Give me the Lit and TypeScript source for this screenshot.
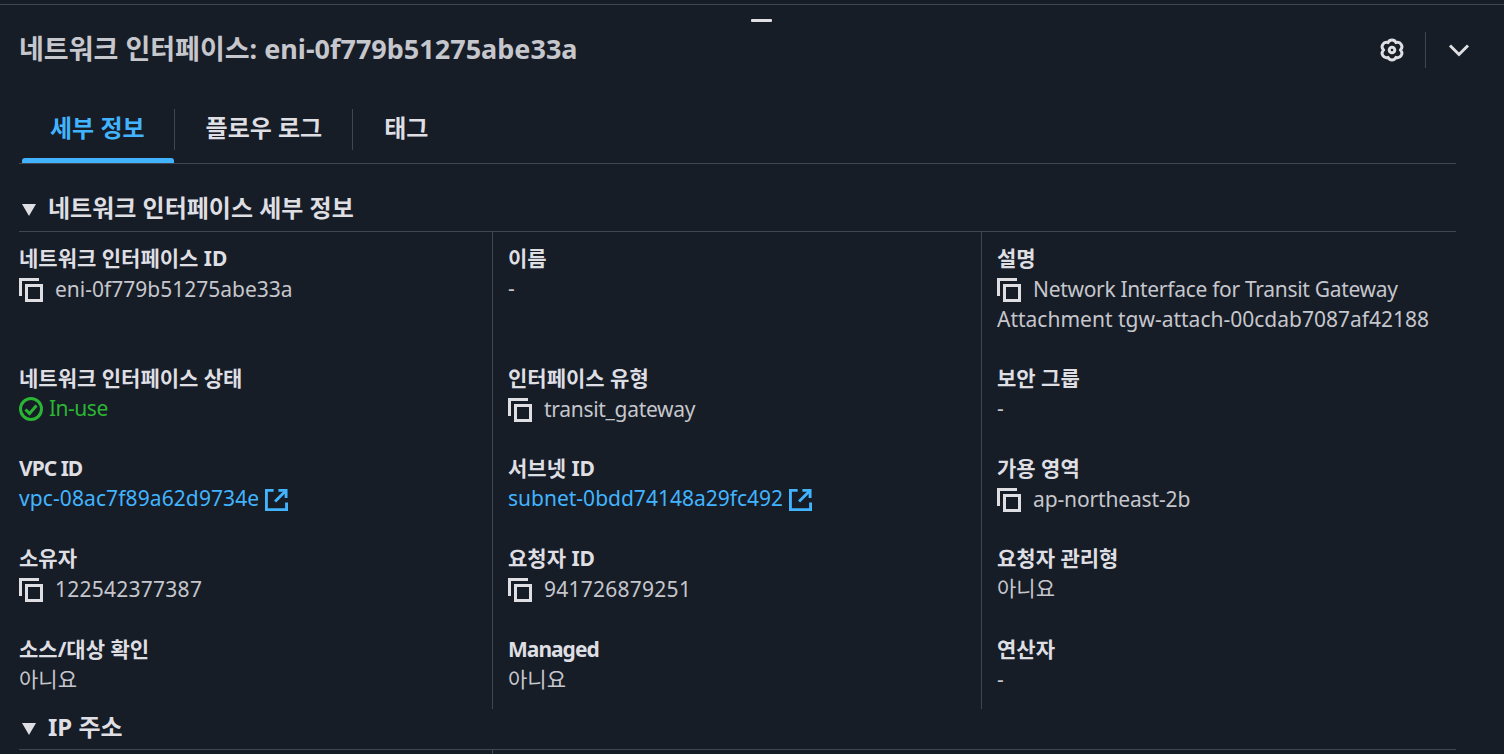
import { LitElement, html, css, svg } from "lit";
import { customElement } from "lit/decorators.js";

const copyIcon = html`<svg class="ico" viewBox="0 0 24 24" fill="none" stroke="currentColor" stroke-width="3">
  <path d="M1.5 18V1.5H20" /><rect x="7.5" y="7.5" width="15" height="15" />
</svg>`;

const extIcon = html`<svg class="ico ext" viewBox="0 0 24 24" fill="none" stroke="currentColor" stroke-width="3">
  <path d="M9 2.5H1.5v20h21V15" /><path d="M14 2.5h8v8" /><path d="M22 2.5 10.5 14" />
</svg>`;

const checkIcon = html`<svg class="ico ok" viewBox="0 0 24 24" fill="none" stroke="currentColor" stroke-width="3">
  <circle cx="12" cy="12" r="10.5" /><path d="M6.5 12.5l4 4L17.5 8.5" />
</svg>`;

const gear = svg`<path d="M8 4.6A4.4 4.4 0 0 1 16 4.6 4.4 4.4 0 0 1 20.4 12 4.4 4.4 0 0 1 16 19.4 4.4 4.4 0 0 1 8 19.4 4.4 4.4 0 0 1 3.6 12 4.4 4.4 0 0 1 8 4.6Z" stroke-linejoin="round" /><circle cx="12" cy="12" r="2.8" />`;

type Field = {
  label: string;
  value: string;
  kind?: "copy" | "link" | "ok";
  // Latin label or value whose advance differs from the installed Noto Sans
  fit?: string;
  labelFit?: boolean;
};

const fields: Field[] = [
  { label: "네트워크 인터페이스 ID", value: "eni-0f779b51275abe33a", kind: "copy" },
  { label: "이름", value: "-" },
  { label: "설명", value: "Attachment tgw-attach-00cdab7087af42188", kind: "copy" },
  { label: "네트워크 인터페이스 상태", value: "In-use", kind: "ok", fit: "tighter" },
  { label: "인터페이스 유형", value: "transit_gateway", kind: "copy", fit: "tight" },
  { label: "보안 그룹", value: "-" },
  { label: "VPC ID", value: "vpc-08ac7f89a62d9734e", kind: "link", fit: "wide", labelFit: true },
  { label: "서브넷 ID", value: "subnet-0bdd74148a29fc492", kind: "link" },
  { label: "가용 영역", value: "ap-northeast-2b", kind: "copy", fit: "slight" },
  { label: "소유자", value: "122542377387", kind: "copy", fit: "num" },
  { label: "요청자 ID", value: "941726879251", kind: "copy", fit: "num" },
  { label: "요청자 관리형", value: "아니요" },
  { label: "소스/대상 확인", value: "아니요" },
  { label: "Managed", value: "아니요", labelFit: true },
  { label: "연산자", value: "-" },
];

@customElement("app-root")
export class AppRoot extends LitElement {
  static styles = css`
    * {
      box-sizing: border-box;
    }

    :host {
      display: block;
      height: 754px;
      overflow: hidden;
      background: #161d26;
      color: #c6c6cd;
      font-family: "Noto Sans", "Noto Sans CJK KR", sans-serif;
      font-size: 21px;
      line-height: 30px;
    }

    .top-line {
      height: 1px;
      margin-top: 4px;
      background: #424650;
    }

    .handle {
      width: 21px;
      height: 3px;
      margin: 14px 0 0 751px;
      border-radius: 1px;
      background: #dedee3;
    }

    .head {
      display: flex;
      align-items: center;
      height: 40px;
      margin-top: 8px;
      padding: 0 34px 0 19px;
    }

    h1 {
      flex: 1;
      align-self: flex-start;
      margin: 0;
      font-size: 27px;
      font-weight: 700;
      line-height: 38px;
      color: #c6c6cd;
    }

    .gear {
      display: block;
      width: 24px;
      height: 24px;
      color: #dedee3;
    }

    .vbar {
      width: 1px;
      height: 36px;
      margin: 0 22px 0 21px;
      background: #424650;
    }

    .chev {
      display: block;
      width: 22px;
      height: 14px;
      color: #dedee3;
    }

    .tabs {
      display: flex;
      height: 55px;
      margin: 39px 48px 0 19px;
      padding-left: 3px;
      border-bottom: 1px solid #424650;
    }

    .tab {
      position: relative;
      height: 54px;
      padding: 0 30px 0 32px;
      font-size: 24px;
      font-weight: 700;
      line-height: 38px;
      color: #dedee3;
    }

    .tab + .tab::before {
      content: "";
      position: absolute;
      left: 0;
      top: 0;
      width: 1px;
      height: 41px;
      background: #424650;
    }

    .tab.active {
      padding: 0 29px 0 28px;
      color: #42b4ff;
    }

    .tab.active::after {
      content: "";
      position: absolute;
      left: 0;
      right: 0;
      bottom: 0;
      height: 5px;
      border-radius: 3px 3px 0 0;
      background: #42b4ff;
    }

    .section {
      margin: 0 48px 0 19px;
    }

    .section-head {
      display: flex;
      gap: 12px;
      height: 41px;
      border-bottom: 1px solid #424650;
      font-size: 24px;
      font-weight: 700;
      line-height: 36px;
      color: #dedee3;
    }

    .first {
      height: 42px;
      margin-top: 26px;
    }

    .caret {
      width: 0;
      height: 0;
      border-left: 7.5px solid transparent;
      border-right: 7.5px solid transparent;
      border-top: 12px solid #dedee3;
      margin: 14px 0 0 3px;
    }

    .grid {
      display: grid;
      grid-template-columns: 473px 489px 1fr;
      grid-template-rows: 120px 90px 90px 91px 86px;
      height: 477px;
    }

    .cell {
      padding: 11px 20px 0 15px;
      border-left: 1px solid #424650;
    }

    .cell:nth-child(3n + 1) {
      padding-left: 0;
      border-left: 0;
    }

    .label {
      font-weight: 700;
      color: #dedee3;
    }

    .label.fit {
      letter-spacing: -1px;
    }

    .value.iconed {
      margin-top: 1px;
    }

    .tighter {
      letter-spacing: -0.5px;
    }

    .tight {
      letter-spacing: -0.3px;
    }

    .slight {
      letter-spacing: -0.14px;
    }

    .wide {
      letter-spacing: 0.1px;
    }

    .num {
      letter-spacing: 0.25px;
    }

    .value .ico {
      display: inline-block;
      width: 24px;
      height: 24px;
      margin-right: 12px;
      vertical-align: -5px;
      color: #dedee3;
    }

    .value .ext {
      width: 23px;
      height: 23px;
      margin: 0 0 0 6px;
      color: #42b4ff;
    }

    .value .ok {
      margin-right: 6px;
      color: #2bb534;
    }

    .value.green {
      color: #2bb534;
    }

    .value a {
      color: #42b4ff;
      text-decoration: none;
    }

    .rule-stub {
      height: 5px;
      margin-left: 473px;
      border-left: 1px solid #424650;
    }
  `;

  renderValue(f: Field) {
    const text = html`<span class=${f.fit ?? ""}>${f.value}</span>`;
    if (f.label == "설명") {
      return html`<div class="value iconed">${copyIcon}<span class="tight">Network Interface for Transit Gateway</span> ${f.value}</div>`;
    }
    if (f.kind == "copy") return html`<div class="value iconed">${copyIcon}${text}</div>`;
    if (f.kind == "ok") return html`<div class="value green">${checkIcon}${text}</div>`;
    if (f.kind == "link") return html`<div class="value"><a class=${f.fit ?? ""}>${f.value}</a>${extIcon}</div>`;
    return html`<div class="value">${text}</div>`;
  }

  render() {
    return html`
      <div class="top-line"></div>
      <div class="handle"></div>
      <div class="head">
        <h1>네트워크 인터페이스: eni-0f779b51275abe33a</h1>
        <svg class="gear" viewBox="0 0 24 24" fill="none" stroke="currentColor" stroke-width="3">${gear}</svg>
        <div class="vbar"></div>
        <svg class="chev" viewBox="0 0 22 14" fill="none" stroke="currentColor" stroke-width="3"><path d="M2 2.5l9 9 9-9" /></svg>
      </div>
      <div class="tabs">
        <div class="tab active">세부 정보</div>
        <div class="tab">플로우 로그</div>
        <div class="tab">태그</div>
      </div>
      <div class="section">
        <div class="section-head first"><span class="caret"></span>네트워크 인터페이스 세부 정보</div>
        <div class="grid">
          ${fields.map(
            (f) => html`<div class="cell">
              <div class="label ${f.labelFit ? "fit" : ""}">${f.label}</div>
              ${this.renderValue(f)}
            </div>`
          )}
        </div>
        <div class="section-head"><span class="caret"></span>IP 주소</div>
        <div class="rule-stub"></div>
      </div>
    `;
  }
}
